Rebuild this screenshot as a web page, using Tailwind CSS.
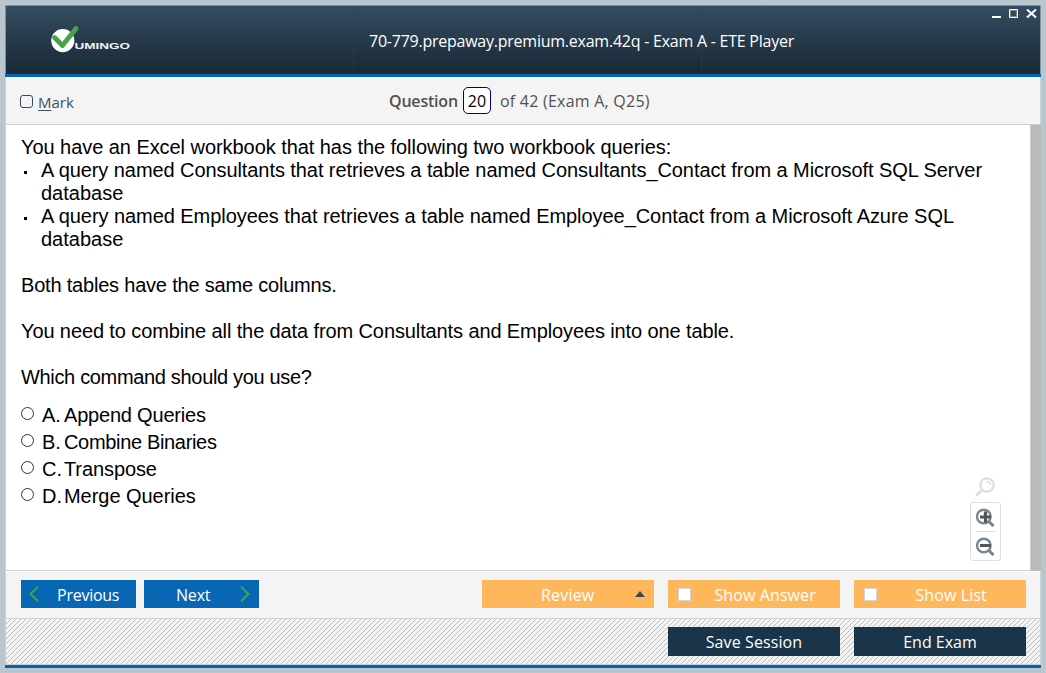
<!DOCTYPE html>
<html lang="en"><head><meta charset="utf-8"><title>ETE Player</title>
<script src="https://cdn.jsdelivr.net/npm/@tailwindcss/browser@4"></script></head>
<body class="h-[673px] w-[1046px] overflow-hidden bg-[#b9c6cd] p-[5px] pb-0 font-['Open_Sans',sans-serif] text-base leading-5">
<main class="flex h-[663px] w-[1036px] flex-col">
  <header class="relative flex h-[69px] shrink-0 items-center border border-b-0 border-[#82929a] bg-linear-to-b from-[#354d62] to-[#192835]">
    <svg class="ml-[43px] mt-0 h-[30px] w-[84px]" viewBox="0 0 84 30"><circle cx="13.8" cy="15.6" r="11.6" fill="#fff"/><path d="M5.5 12.5L13.5 20.5 27 3.5" fill="none" stroke="#44a548" stroke-width="4.8" stroke-linecap="round" stroke-linejoin="round"/><text x="25.5" y="23.5" fill="#f3f5f6" font-family="Liberation Sans, sans-serif" font-size="9.8" font-weight="bold" textLength="55.5" lengthAdjust="spacingAndGlyphs">UMINGO</text></svg>
    <div class="absolute inset-y-0 left-[347px] w-[349px] border-x border-dotted border-[#293c68]"></div>
    <h1 class="absolute left-[363px] top-[25px] whitespace-nowrap text-[16px] font-medium tracking-[-0.24px] text-white">70-779.prepaway.premium.exam.42q - Exam A - ETE Player</h1>
    <svg class="absolute right-[2px] top-[2px] h-[12px] w-[48px]" viewBox="0 0 48 12" fill="none" stroke="#fff"><path d="M2 9H11" stroke-width="2"/><path d="M19.5 1.5h8v8h-8z"/><path d="M20.5 2.5h6v6h-6z" stroke="#8b8580"/><path d="M37 1.5l9 8M46 1.5l-9 8" stroke-width="2"/></svg>
  </header>
  <div class="h-[3px] shrink-0 bg-[#0563b4]"></div>
  <section class="flex h-[48px] shrink-0 items-center border-x border-b border-[#d0d0d0] bg-[#f4f4f4] text-[16px] text-[#515151]">
    <label class="ml-[14px] mt-[3px] flex w-[369px] items-center gap-[5px] text-[15px] text-[#40515f]"><span class="-mt-[2px] size-[13px] rounded-[3px] border border-[#354b60]"></span><span><u class="underline-offset-2">M</u>ark</span></label>
    <strong class="w-[74px] font-semibold tracking-[-0.2px]">Question</strong>
    <span class="flex h-[27px] w-[28px] items-center justify-center rounded-[5px] border border-[#000080] bg-white text-black">20</span>
    <span class="ml-[9px] tracking-[0.23px]">of 42 (Exam A, Q25)</span>
  </section>
  <section class="flex h-[446px] shrink-0 border-l border-[#d0d0d0] bg-white">
    <div class="relative h-[446px] w-[1024px] border-b border-[#d0d0d0] pl-[15px] pt-[11px] font-['Liberation_Sans',sans-serif] text-[20px] leading-[23px] text-black">
      <p class="tracking-[-0.055px]">You have an Excel workbook that has the following two workbook queries:</p>
      <ul><li class="flex"><i class="ml-[3px] mr-[14px] mt-[12px] size-[3px] shrink-0 bg-black"></i><span><span class="tracking-[-0.075px]">A query named Consultants that retrieves a table named Consultants_Contact from a Microsoft SQL Server</span><br>database</span></li>
      <li class="flex"><i class="ml-[3px] mr-[14px] mt-[12px] size-[3px] shrink-0 bg-black"></i><span><span class="tracking-[-0.055px]">A query named Employees that retrieves a table named Employee_Contact from a Microsoft Azure SQL</span><br>database</span></li></ul>
      <p class="mt-[23px] tracking-[-0.2px]">Both tables have the same columns.</p>
      <p class="mt-[23px] tracking-[-0.11px]">You need to combine all the data from Consultants and Employees into one table.</p>
      <p class="mt-[23px] tracking-[-0.33px]">Which command should you use?</p>
      <div class="mt-[13px] leading-[27px]">
        <div class="flex"><i class="mt-[5px] size-[13px] rounded-full border border-[#333]"></i><span class="ml-2 w-[22px]">A.</span><span class="tracking-[-0.2px]">Append Queries</span></div>
        <div class="flex"><i class="mt-[5px] size-[13px] rounded-full border border-[#333]"></i><span class="ml-2 w-[22px]">B.</span><span class="tracking-[-0.33px]">Combine Binaries</span></div>
        <div class="flex"><i class="mt-[5px] size-[13px] rounded-full border border-[#333]"></i><span class="ml-2 w-[22px]">C.</span><span class="tracking-[-0.1px]">Transpose</span></div>
        <div class="flex"><i class="mt-[5px] size-[13px] rounded-full border border-[#333]"></i><span class="ml-2 w-[22px]">D.</span><span class="tracking-[-0.04px]">Merge Queries</span></div>
      </div>
      <div class="absolute bottom-[9px] right-[29px] flex w-[31px] flex-col items-center">
        <svg class="mb-[5px] mr-[2px] size-5" viewBox="0 0 20 20" fill="none" stroke="#dedede" stroke-linecap="round"><circle cx="12" cy="8" r="6.7" stroke-width="2.2"/><path d="M12 4.5q3 .5 3.5 3" stroke-width="1.4"/><path d="M7 13l-5 5" stroke-width="3"/></svg>
        <div class="flex h-[59px] w-[31px] flex-col items-center rounded-[3px] border border-[#dedede] bg-white">
          <svg class="my-[4px] mr-[2px] h-5 w-5" viewBox="0 0 20 20" fill="none"><circle cx="8.8" cy="9.5" r="6.8" stroke="#778693" stroke-width="2.4"/><path d="M13.5 14.2l5 4.8" stroke="#778693" stroke-width="3"/><path d="M5 10h11M10.5 4.5v11" stroke="#555" stroke-width="3.2"/></svg>
          <div class="h-px w-[19px] shrink-0 bg-[#dedede]"></div>
          <svg class="my-[4px] mr-[2px] h-5 w-5" viewBox="0 0 20 20" fill="none"><circle cx="8.8" cy="9.5" r="6.8" stroke="#778693" stroke-width="2.4"/><path d="M13.5 14.2l5 4.8" stroke="#778693" stroke-width="3"/><path d="M5 9.5h11" stroke="#555" stroke-width="3"/></svg>
        </div>
      </div>
    </div>
    <div class="w-[11px] border-l border-[#d0d0d0] bg-[#bbbab6]"></div>
  </section>
  <section class="flex h-[48px] shrink-0 items-start border border-x-[#d0d0d0] border-b-[#d0d0d0] border-t-white bg-[#f4f4f4] pl-[15px] pt-[8px] text-white">
    <button class="flex h-[28px] w-[115px] items-center bg-[#0867b5] pl-[8px]"><svg class="h-4 w-[10px]" viewBox="0 0 10 16" fill="none" stroke="#44a548" stroke-width="2"><path d="M9 .8L1.5 8 9 15.2"/></svg><span class="ml-[18px] mt-[2px] tracking-[-0.25px]">Previous</span></button>
    <button class="ml-2 flex h-[28px] w-[115px] items-center bg-[#0867b5] pl-[32px]"><span class="mt-[2px] w-[64px] text-left tracking-[-0.2px]">Next</span><svg class="h-4 w-[10px]" viewBox="0 0 10 16" fill="none" stroke="#44a548" stroke-width="2"><path d="M1 .8L8.5 8 1 15.2"/></svg></button>
    <button class="ml-[223px] flex h-[28px] w-[172px] items-center bg-[#ffb75b] pl-[59px]"><span class="mt-[2px] w-[94px] text-left tracking-[0.2px]">Review</span><svg class="h-[6px] w-[10px]" viewBox="0 0 10 6"><path d="M0 6L5 0l5 6z" fill="#344b5e"/></svg></button>
    <label class="ml-[14px] flex h-[28px] w-[172px] items-center bg-[#ffb75b] pl-[10px]"><span class="size-[13px] border border-[#d5d5d5] bg-white"></span><span class="ml-[23.5px] mt-[2px] tracking-[0.1px]">Show Answer</span></label>
    <label class="ml-[14px] flex h-[28px] w-[172px] items-center bg-[#ffb75b] pl-[10px]"><span class="size-[13px] border border-[#d5d5d5] bg-white"></span><span class="ml-[38.5px] mt-[2px] tracking-[0.1px]">Show List</span></label>
  </section>
  <section class="relative h-[46px] shrink-0 border-x border-b border-[#d0d0d0] bg-[#f4f4f4]">
    <svg class="absolute inset-0 h-full w-full"><defs><pattern id="hatch" width="5" height="5" patternUnits="userSpaceOnUse"><path d="M0 4h1v1H0zM1 3h1v1H1zM2 2h1v1H2zM3 1h1v1H3zM4 0h1v1H4z" fill="#bcbcbc" shape-rendering="crispEdges"/></pattern></defs><rect width="100%" height="100%" fill="url(#hatch)"/></svg>
    <div class="relative flex justify-end gap-[14px] pr-[14px] pt-[8px] text-white">
      <button class="h-[29px] w-[172px] bg-[#1a344a] tracking-[0.1px]">Save Session</button>
      <button class="h-[29px] w-[172px] bg-[#1a344a]">End Exam</button>
    </div>
  </section>
  <div class="h-[3px] shrink-0 bg-[#0563b4]"></div>
</main></body></html>
